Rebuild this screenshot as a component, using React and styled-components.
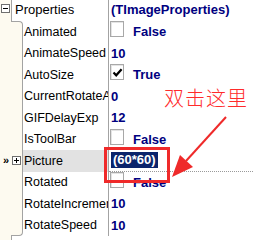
import React from 'react'
import styled, { createGlobalStyle } from 'styled-components'

const GlobalStyle = createGlobalStyle`
  html, body {
    margin: 0;
    padding: 0;
    background: #fff;
  }
  body {
    font-family: "Liberation Sans", Arial, sans-serif;
    font-size: 13px;
  }
`

const Panel = styled.div`
  position: relative;
  width: 253px;
  height: 240px;
  overflow: hidden;
  background: #fff;
`

const Row = styled.div`
  display: flex;
  height: ${p => p.h || 21.5}px;
  background: #fff;
`

const Mark = styled.div`
  width: 11px;
  flex: none;
  background: #fdfaf0;
  display: flex;
  align-items: ${p => (p.top ? 'flex-start' : 'center')};
  justify-content: center;
  padding-top: ${p => (p.top ? 4 : 0)}px;
  box-sizing: border-box;
  font-weight: bold;
  font-size: 11px;
  line-height: 1;
  color: #000;
  letter-spacing: -1px;
`

const InnerGutter = styled.div`
  width: 12px;
  flex: none;
  box-sizing: border-box;
  background: #fdfaf0;
  border-right: 1px solid #a3a3a3;
  border-top: ${p => (p.first ? '1px solid #a3a3a3' : 'none')};
  border-bottom: ${p => (p.last ? '1px solid #a3a3a3' : 'none')};
  border-top-right-radius: ${p => (p.first ? 4 : 0)}px;
  border-bottom-right-radius: ${p => (p.last ? 4 : 0)}px;
  display: flex;
  align-items: center;
`

const Toggle = styled.div`
  width: 9px;
  height: 9px;
  box-sizing: border-box;
  border: 1px solid #6f6f6f;
  background: #fff;
  position: relative;
  margin-left: ${p => p.ml || 0}px;
  &::before {
    content: '';
    position: absolute;
    left: 1px;
    right: 1px;
    top: 3px;
    height: 1px;
    background: #000;
  }
  &::after {
    content: '';
    display: ${p => (p.plus ? 'block' : 'none')};
    position: absolute;
    top: 1px;
    bottom: 1px;
    left: 3px;
    width: 1px;
    background: #000;
  }
`

const HeaderBody = styled.div`
  flex: 1;
  display: flex;
  border-left: 1px solid #a3a3a3;
`

const HeaderName = styled.div`
  width: 97px;
  flex: none;
  box-sizing: border-box;
  border-right: 1px solid #a3a3a3;
  padding: 2px 0 0 3px;
  line-height: 15px;
  color: #000;
`

const Name = styled.div`
  width: 86px;
  flex: none;
  box-sizing: border-box;
  border-right: 1px solid #a3a3a3;
  padding-left: 1px;
  display: flex;
  align-items: center;
  white-space: nowrap;
  overflow: hidden;
  text-overflow: clip;
  font-size: 12.5px;
  color: #000;
  background: ${p => (p.selected ? '#e2e2e2' : '#fff')};
`

const Value = styled.div`
  flex: 1;
  display: flex;
  align-items: ${p => (p.top ? 'flex-start' : 'center')};
  padding-left: ${p => (p.check ? 1 : 2)}px;
  padding-top: ${p => (p.top ? 2 : 0)}px;
  font-weight: bold;
  color: #000080;
  white-space: nowrap;
  line-height: 15px;
  border-bottom: ${p => (p.dotted ? '1px dotted #9a9a9a' : 'none')};
`

const CheckBox = styled.div`
  width: 14px;
  height: 16px;
  box-sizing: border-box;
  border: 1px solid #a8a8a8;
  background: #fff;
  box-shadow: inset 1px 1px 0 #e4e4e4;
  align-self: flex-start;
  margin-right: 9px;
  display: flex;
  align-items: center;
  justify-content: center;
`

const Highlight = styled.span`
  background: #0b246b;
  color: #fff;
  padding: 1px 2px;
  line-height: 14px;
`

const Footer = styled.div`
  display: flex;
  height: 6px;
`

const FooterWhite = styled.div`
  flex: 1;
  background: #fff;
  border-left: 1px solid #a3a3a3;
`

const Callout = styled.div`
  position: absolute;
  left: 164px;
  top: 85px;
  font-family: "Noto Sans CJK SC", sans-serif;
  font-size: 20px;
  font-weight: 300;
  letter-spacing: 1px;
  color: #ff2b2b;
  line-height: 26px;
`

const RedBox = styled.div`
  position: absolute;
  left: 104px;
  top: 147px;
  width: 66px;
  height: 36px;
  box-sizing: border-box;
  border: 3px solid #ef2a2a;
`

const Overlay = styled.svg`
  position: absolute;
  left: 0;
  top: 0;
  pointer-events: none;
`

const Check = () => (
  <svg width="11" height="11" viewBox="0 0 11 11">
    <path d="M1.5 5.5 L4.2 8.3 L9.6 2.2" fill="none" stroke="#000" strokeWidth="2.2" />
  </svg>
)

const rows = [
  { name: 'Animated', check: false, value: 'False' },
  { name: 'AnimateSpeed', value: '10' },
  { name: 'AutoSize', check: true, value: 'True' },
  { name: 'CurrentRotateAngle', value: '0' },
  { name: 'GIFDelayExp', value: '12' },
  { name: 'IsToolBar', check: false, value: 'False' },
  { name: 'Picture', picture: true, value: '(60*60)' },
  { name: 'Rotated', check: false, value: 'False' },
  { name: 'RotateIncrement', value: '10' },
  { name: 'RotateSpeed', value: '10' },
]

export default function App() {
  return (
    <>
      <GlobalStyle />
      <Panel>
        <Row h={21}>
          <Mark top><Toggle /></Mark>
          <HeaderBody>
            <HeaderName>Properties</HeaderName>
            <Value top>(TImageProperties)</Value>
          </HeaderBody>
        </Row>
        {rows.map((r, i) => (
          <Row key={r.name}>
            <Mark>{r.picture ? '»' : ''}</Mark>
            <InnerGutter first={i === 0} last={i === rows.length - 1}>
              {r.picture && <Toggle plus ml={1} />}
            </InnerGutter>
            <Name selected={r.picture}>{r.name}</Name>
            {r.picture ? (
              <Value dotted><Highlight>{r.value}</Highlight></Value>
            ) : (
              <Value check={'check' in r}>
                {'check' in r && <CheckBox>{r.check && <Check />}</CheckBox>}
                {r.value}
              </Value>
            )}
          </Row>
        ))}
        <Footer>
          <Mark />
          <FooterWhite />
        </Footer>

        <Callout>双击这里</Callout>
        <RedBox />
        <Overlay width="253" height="240">
          <line x1="226" y1="117" x2="186" y2="161" stroke="#ef2a2a" strokeWidth="2" />
          <polygon points="172,177 193,167 180,155" fill="#ef2a2a" />
        </Overlay>
      </Panel>
    </>
  )
}
